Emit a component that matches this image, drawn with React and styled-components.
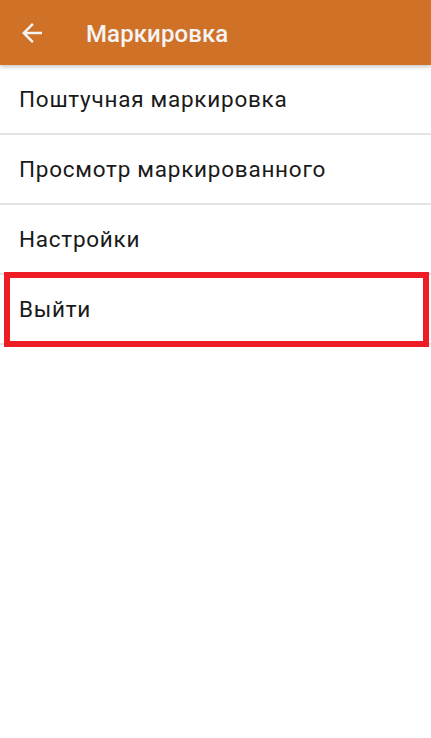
import React from "react";
import styled, { createGlobalStyle } from "styled-components";

const GlobalStyle = createGlobalStyle`
  html, body {
    margin: 0;
    padding: 0;
    background: #fff;
    font-family: Roboto, "Noto Sans", sans-serif;
  }
`;

// Styled Components for UI
const Screen = styled.div`
  width: 431px;
  height: 738px;
  background: #fff;
  overflow: hidden;
`;

const Toolbar = styled.header`
  position: relative;
  z-index: 1;
  height: 65px;
  display: flex;
  align-items: center;
  background: #d07128;
  box-shadow: 0px 2px 4px rgba(0, 0, 0, 0.22);
`;

const BackButton = styled.button`
  width: 30px;
  height: 30px;
  margin-left: 17px;
  padding: 0;
  border: none;
  background: none;
  display: flex;
  cursor: pointer;
`;

const Title = styled.h1`
  margin: 2px 0 0 39px;
  font-size: 24px;
  font-weight: 500;
  color: #f4f4f4;
  letter-spacing: 0.1px;
`;

const Menu = styled.ul`
  list-style: none;
  margin: 0;
  padding: 0;
`;

const MenuItem = styled.li`
  position: relative;
  height: 70px;
  box-sizing: border-box;
  display: flex;
  align-items: center;
  padding-left: 19px;
  font-size: 22.5px;
  letter-spacing: 0.75px;
  color: #1a1a1a;
  border-bottom: 2px solid #e4e4e4;
`;

const Highlight = styled.div`
  position: absolute;
  left: 4px;
  right: 2px;
  top: -3px;
  bottom: -4px;
  border: 6px solid #ee1d25;
  pointer-events: none;
`;

const items = [
  { id: 1, title: "Поштучная маркировка" },
  { id: 2, title: "Просмотр маркированного" },
  { id: 3, title: "Настройки" },
  { id: 4, title: "Выйти", marked: true },
];

const App = () => {
  return (
    <Screen>
      <GlobalStyle />
      <Toolbar>
        <BackButton aria-label="Назад">
          <svg width="30" height="30" viewBox="0 0 24 24">
            <path
              fill="#f4f4f4"
              d="M20 11H7.83l5.59-5.59L12 4l-8 8 8 8 1.41-1.41L7.83 13H20v-2z"
            />
          </svg>
        </BackButton>
        <Title>Маркировка</Title>
      </Toolbar>
      <Menu>
        {items.map((item) => (
          <MenuItem key={item.id}>
            {item.title}
            {item.marked && <Highlight />}
          </MenuItem>
        ))}
      </Menu>
    </Screen>
  );
};

export default App;
